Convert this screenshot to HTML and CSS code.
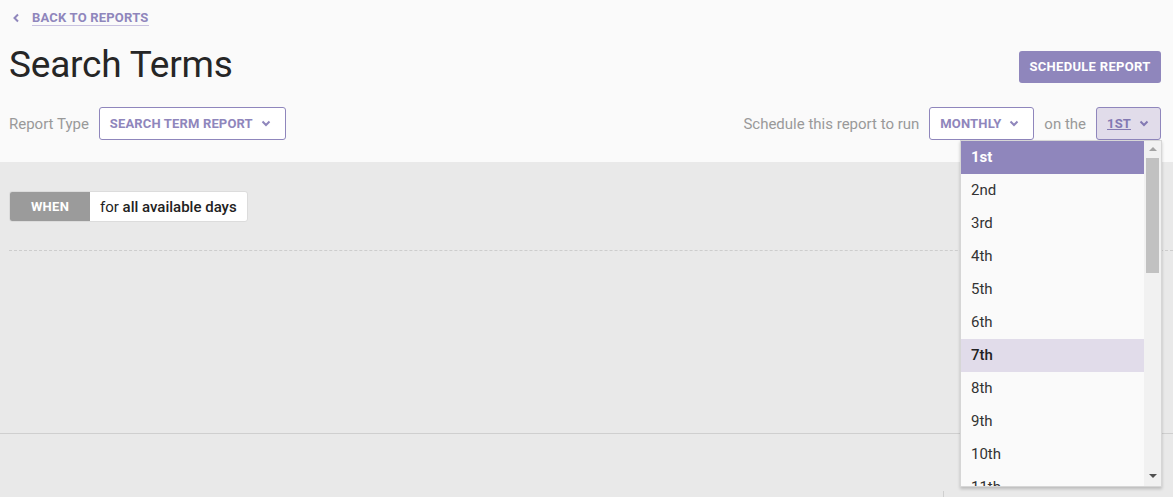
FILE: index.html
```html
<!DOCTYPE html>
<html>
<head>
<meta charset="utf-8">
<link rel="stylesheet" href="styles.css">
</head>
<body>
<div class="page">
  <header class="header">
    <a class="back" href="#">
      <svg class="back-icon" width="8" height="10" viewBox="0 0 8 10"><path d="M6 1.5 L2.5 5 L6 8.5" fill="none" stroke="#8f86bc" stroke-width="2"/></svg>
      <span class="back-text">BACK TO REPORTS</span>
    </a>
    <div class="title-row">
      <h1 class="title">Search Terms</h1>
      <button class="primary-btn">SCHEDULE REPORT</button>
    </div>
    <div class="controls">
      <div class="group">
        <span class="label">Report Type</span>
        <div class="select">SEARCH TERM REPORT
          <svg class="chev" width="10" height="7" viewBox="0 0 10 7"><path d="M1.5 1.5 L5 5 L8.5 1.5" fill="none" stroke="#8f86bc" stroke-width="2"/></svg>
        </div>
      </div>
      <div class="group">
        <span class="label">Schedule this report to run</span>
        <div class="select">MONTHLY
          <svg class="chev" width="10" height="7" viewBox="0 0 10 7"><path d="M1.5 1.5 L5 5 L8.5 1.5" fill="none" stroke="#8f86bc" stroke-width="2"/></svg>
        </div>
        <span class="label">on the</span>
        <div class="select select-open"><span class="u">1ST</span>
          <svg class="chev" width="10" height="7" viewBox="0 0 10 7"><path d="M1.5 1.5 L5 5 L8.5 1.5" fill="none" stroke="#8379b3" stroke-width="2"/></svg>
        </div>
      </div>
    </div>
  </header>
  <main class="main">
    <div class="when">
      <span class="when-tag">WHEN</span>
      <span class="when-text">for <span class="strong">all available days</span></span>
    </div>
    <div class="dashed"></div>
  </main>
  <div class="lower"><div class="tick"></div></div>

  <div class="dropdown">
    <ul class="options">
      <li class="opt selected">1st</li>
      <li class="opt">2nd</li>
      <li class="opt">3rd</li>
      <li class="opt">4th</li>
      <li class="opt">5th</li>
      <li class="opt">6th</li>
      <li class="opt hover">7th</li>
      <li class="opt">8th</li>
      <li class="opt">9th</li>
      <li class="opt">10th</li>
      <li class="opt">11th</li>
    </ul>
    <div class="scrollbar">
      <div class="arrow-up"></div>
      <div class="thumb"></div>
      <div class="track"></div>
      <div class="arrow-down"></div>
    </div>
  </div>
</div>
</body>
</html>
```

FILE: styles.css
```css
* { box-sizing: border-box; }
html, body { margin: 0; padding: 0; }
body {
  font-family: Roboto, "Liberation Sans", sans-serif;
  background: #e9e9e9;
  width: 1173px;
  height: 497px;
  overflow: hidden;
}
.page { position: relative; height: 497px; }

.header {
  background: #fafafa;
  padding: 8px 12px 22px 9px;
  height: 162px;
}
.back {
  display: flex;
  align-items: center;
  gap: 12px;
  margin-left: 3px;
  text-decoration: none;
  height: 20px;
}
.back-icon { display: block; }
.back-text {
  font-size: 13px;
  font-weight: 700;
  color: #8f86bc;
  letter-spacing: 0.2px;
  border-bottom: 1px solid #c9c2e0;
  line-height: 15px;
}
.title-row {
  display: flex;
  justify-content: space-between;
  align-items: center;
  margin-top: 14px;
  height: 44px;
}
.title {
  margin: 0;
  font-size: 37px;
  font-weight: 400;
  color: #262626;
  letter-spacing: -0.2px;
}
.primary-btn {
  margin-top: 5px;
  height: 32px;
  width: 142px;
  border: none;
  border-radius: 3px;
  background: #8f86bc;
  color: #fff;
  font-family: Roboto, "Liberation Sans", sans-serif;
  font-size: 13px;
  letter-spacing: 0.3px;
  font-weight: 700;
  padding: 0;
}
.controls {
  display: flex;
  justify-content: space-between;
  align-items: center;
  margin-top: 21px;
}
.group {
  display: flex;
  align-items: center;
  gap: 10px;
}
.label {
  font-size: 15px;
  color: #999;
}
.select {
  height: 33px;
  display: flex;
  align-items: center;
  gap: 8px;
  padding: 0 14px 0 10px;
  border: 1px solid #8f86bc;
  border-radius: 3px;
  background: #fff;
  color: #8f86bc;
  font-size: 13px;
  letter-spacing: 0.15px;
  font-weight: 700;
}
.select-open {
  background: #e1dcea;
  color: #8379b3;
  padding: 0 11px 0 10px;
}
.u { text-decoration: underline; }
.chev { display: block; }

.main {
  padding: 29px 0 0 9px;
  height: 272px;
  border-bottom: 1px solid #cfcfcf;
}
.when {
  display: inline-flex;
  height: 31px;
  border: 1px solid #dcdcdc;
  border-radius: 3px;
  overflow: hidden;
  background: #fff;
}
.when-tag {
  width: 80px;
  background: #9b9b9b;
  color: #fff;
  font-size: 13px;
  letter-spacing: 0.3px;
  font-weight: 700;
  display: flex;
  align-items: center;
  justify-content: center;
}
.when-text {
  display: flex;
  align-items: center;
  padding: 0 10px;
  font-size: 15px;
  color: #222;
  white-space: pre;
}
.strong { font-weight: 500; }
.dashed {
  margin-top: 28px;
  border-top: 1px dashed #cdcdcd;
}
.lower {
  position: relative;
  height: 62px;
}
.tick {
  position: absolute;
  left: 943px;
  top: 57px;
  width: 1px;
  height: 6px;
  background: #cfcfcf;
}

.dropdown {
  position: absolute;
  top: 140px;
  left: 960px;
  width: 202px;
  height: 347px;
  display: flex;
  background: #fafafa;
  border: 1px solid #d6d6d6;
  box-shadow: 0 2px 3px rgba(0,0,0,0.2);
  overflow: hidden;
}
.options {
  list-style: none;
  margin: 0;
  padding: 0;
  flex: 1;
  overflow: hidden;
}
.opt {
  height: 33px;
  line-height: 33px;
  padding-left: 10px;
  font-size: 15px;
  color: #333;
}
.opt.selected {
  background: #8f86bc;
  color: #fff;
  font-weight: 700;
}
.opt.hover {
  background: #e1dcea;
  color: #222;
  font-weight: 500;
}
.scrollbar {
  width: 17px;
  background: #f1f1f1;
  display: flex;
  flex-direction: column;
  align-items: center;
}
.arrow-up {
  width: 0; height: 0;
  margin-top: 6px;
  border-left: 4px solid transparent;
  border-right: 4px solid transparent;
  border-bottom: 4px solid #a3a3a3;
}
.thumb {
  margin-top: 7px;
  width: 13px;
  height: 115px;
  background: #c1c1c1;
}
.track { flex: 1; }
.arrow-down {
  width: 0; height: 0;
  margin-bottom: 8px;
  border-left: 4px solid transparent;
  border-right: 4px solid transparent;
  border-top: 4px solid #505050;
}
```
